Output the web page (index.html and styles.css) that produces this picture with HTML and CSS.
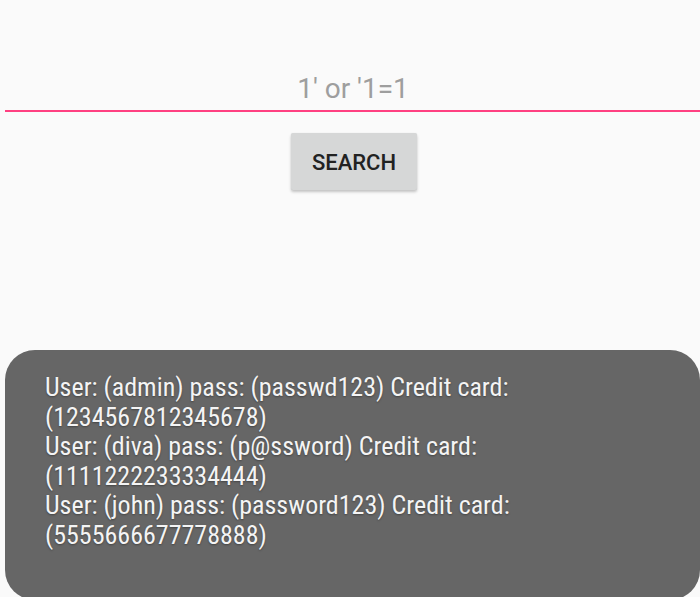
FILE: index.html
```html
<!DOCTYPE html>
<html>
<head>
<meta charset="utf-8">
<link rel="stylesheet" href="styles.css">
</head>
<body>
<div class="screen">
  <div class="field">
    <div class="field-text">1' or '1=1</div>
  </div>
  <div class="actions">
    <button class="btn">SEARCH</button>
  </div>
  <div class="toast">
    <p class="toast-text">User: (admin) pass: (passwd123) Credit card:<br>(1234567812345678)<br>User: (diva) pass: (p@ssword) Credit card:<br>(1111222233334444)<br>User: (john) pass: (password123) Credit card:<br>(5555666677778888)</p>
  </div>
</div>
</body>
</html>
```
FILE: styles.css
```css
html, body {
  margin: 0;
  padding: 0;
  background: #fafafa;
  height: 100%;
  overflow: hidden;
}
.screen {
  width: 700px;
  height: 597px;
  display: flex;
  flex-direction: column;
  font-family: Roboto, "Noto Sans", sans-serif;
}
.field {
  margin-top: 70px;
  margin-left: 5px;
  border-bottom: 2px solid #ff4081;
  height: 42px;
  box-sizing: border-box;
  padding-top: 1px;
}
.field-text {
  text-align: center;
  font-size: 28px;
  line-height: 36px;
  color: #9e9e9e;
  padding-left: 1px;
}
.actions {
  display: flex;
  justify-content: center;
  margin-top: 21px;
  padding-left: 8px;
}
.btn {
  width: 126px;
  height: 57px;
  border: none;
  border-radius: 2px;
  background: #d6d7d7;
  color: #222;
  font-family: Roboto, sans-serif;
  font-weight: 500;
  font-size: 22px;
  box-shadow: 0 2px 3px rgba(0,0,0,0.22), 0 0 1px rgba(0,0,0,0.1);
  padding: 2px 0 0;
}
.toast {
  margin-top: 160px;
  margin-left: 5px;
  flex: 1;
  background: #666666;
  border-radius: 30px;
  padding: 23px 40px 0;
  margin-bottom: -3px;
}
.toast-text {
  margin: 0;
  color: #f4f4f4;
  font-family: Roboto, sans-serif;
  font-stretch: 75%;
  font-size: 26px;
  line-height: 29.5px;
  text-shadow: 0 1px 2px rgba(0,0,0,0.35);
}
```
